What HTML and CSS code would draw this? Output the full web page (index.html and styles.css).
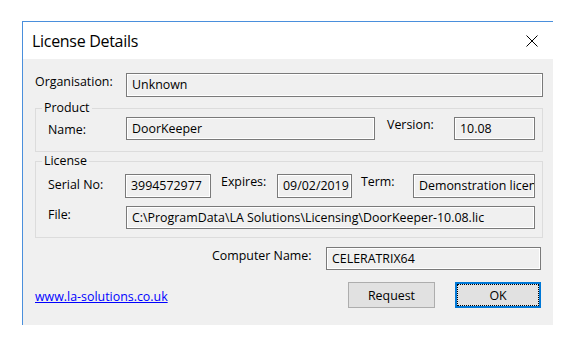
FILE: index.html
```html
<!DOCTYPE html>
<html lang="en">
<head>
    <meta charset="UTF-8">
    <title>License Details</title>
    <link rel="stylesheet" href="styles.css">
</head>
<body>

<div class="window">
    <!-- Titelleiste -->
    <div class="titlebar">
        <span class="title">License Details</span>
        <svg class="close" width="12" height="12" viewBox="0 0 12 12">
            <path d="M0.5 0.5 L11.5 11.5 M11.5 0.5 L0.5 11.5" stroke="#000" stroke-width="1" fill="none"/>
        </svg>
    </div>

    <div class="dialog">
        <!-- Organisation -->
        <div class="row org-row">
            <label class="lbl lbl-org">Organisation:</label>
            <div class="field field-org">Unknown</div>
        </div>

        <!-- Product -->
        <fieldset class="group group-product">
            <legend>Product</legend>
            <div class="row">
                <label class="lbl lbl-name">Name:</label>
                <div class="field field-name short">DoorKeeper</div>
                <label class="lbl lbl-version">Version:</label>
                <div class="field field-version short">10.08</div>
            </div>
        </fieldset>

        <!-- License -->
        <fieldset class="group group-license">
            <legend>License</legend>
            <div class="row">
                <label class="lbl lbl-serial">Serial No:</label>
                <div class="field field-serial">3994572977</div>
                <label class="lbl lbl-expires">Expires:</label>
                <div class="field field-expires">09/02/2019</div>
                <label class="lbl lbl-term">Term:</label>
                <div class="field field-term">Demonstration licen</div>
            </div>
            <div class="row file-row">
                <label class="lbl lbl-file">File:</label>
                <div class="field field-file short">C:\ProgramData\LA Solutions\Licensing\DoorKeeper-10.08.lic</div>
            </div>
        </fieldset>

        <!-- Computer Name -->
        <div class="row computer-row">
            <label class="lbl lbl-computer">Computer Name:</label>
            <div class="field field-computer short">CELERATRIX64</div>
        </div>

        <!-- Link und Buttons -->
        <div class="row bottom-row">
            <a class="link" href="#">www.la-solutions.co.uk</a>
            <button class="btn btn-request">Request</button>
            <button class="btn btn-ok">OK</button>
        </div>
    </div>
</div>

</body>
</html>
```

FILE: styles.css
```css
/* Grundlayout */
body {
    margin: 0;
    padding: 21px 0 0 22px;
    background-color: #fff;
    color: #000;
    font-family: "Open Sans", "Noto Sans", sans-serif;
    font-size: 12.4px;
}

.window {
    width: 531px;
    border-top: 1px solid #4a8fdc;
    border-left: 1px solid #4a8fdc;
    box-sizing: border-box;
}

.titlebar {
    height: 37px;
    display: flex;
    align-items: center;
    justify-content: space-between;
    padding: 0 15px 0 9px;
    background-color: #fff;
}

.title {
    font-size: 16px;
    letter-spacing: -0.3px;
}

.close {
    display: block;
    margin-top: 1px;
}

.dialog {
    height: 266px;
    background-color: #f0f0f0;
    padding: 14px 10px 0 12px;
    box-sizing: border-box;
}

.row {
    display: flex;
    align-items: flex-start;
}

.lbl {
    line-height: 16px;
    white-space: nowrap;
}

.field {
    height: 24px;
    line-height: 22px;
    padding: 0 5px;
    border: 1px solid #7a7a7a;
    box-shadow: inset 0 0 0 1px #fff;
    background-color: #f0f0f0;
    box-sizing: border-box;
    white-space: nowrap;
    overflow: hidden;
}

.field.short {
    height: 23px;
    line-height: 21px;
}

/* Organisation */
.lbl-org {
    width: 91px;
    padding-top: 1px;
}

.field-org {
    width: 417px;
}

/* Gruppen */
.group {
    margin: 0;
    padding: 0 0 0 12px;
    border: 1px solid #dcdcdc;
    min-width: 0;
}

.group legend {
    padding: 0 2px;
    margin-left: -6px;
    line-height: 16px;
}

.group-product {
    margin-top: 3px;
    padding-top: 1px;
    padding-bottom: 11px;
}

.group-license {
    margin-top: 1px;
    padding-top: 5px;
    padding-bottom: 8px;
}

.lbl-name {
    width: 78px;
    padding-top: 5px;
}

.field-name {
    width: 249px;
}

.lbl-version {
    width: 67px;
    margin-left: 12px;
}

.field-version {
    width: 81px;
}

.lbl-serial {
    width: 77px;
    padding-top: 3px;
}

.field-serial {
    width: 86px;
}

.lbl-expires {
    width: 56px;
    margin-left: 10px;
}

.field-expires {
    width: 75px;
}

.lbl-term {
    width: 52px;
    margin-left: 9px;
}

.field-term {
    width: 122px;
    padding-right: 0;
}

.file-row {
    margin-top: 8px;
}

.lbl-file {
    width: 78px;
    padding-top: 1px;
}

.field-file {
    width: 409px;
}

/* Computer Name */
.computer-row {
    margin-top: 9px;
}

.lbl-computer {
    width: 114px;
    margin-left: 177px;
    padding-top: 1px;
}

.field-computer {
    width: 215px;
}

/* Link und Buttons */
.bottom-row {
    margin-top: 12px;
    align-items: center;
}

.link {
    color: #0000ff;
    text-decoration: underline;
    margin-right: auto;
    margin-top: 2px;
}

.btn {
    height: 26px;
    font-family: inherit;
    font-size: 12.4px;
    color: #000;
    background-color: #e1e1e1;
    border: 1px solid #adadad;
    padding: 0;
    box-sizing: border-box;
}

.btn-request {
    width: 87px;
}

.btn-ok {
    width: 86px;
    margin-left: 20px;
    margin-right: 2px;
    border: 2px solid #0078d7;
    outline: 1px dotted #000;
    outline-offset: -3px;
}
```
